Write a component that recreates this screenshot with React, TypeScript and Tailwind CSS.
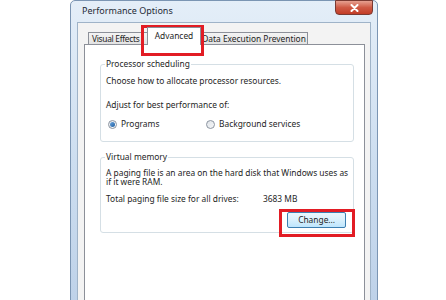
export default function App() {
  const font = { fontFamily: '"Noto Sans", "Open Sans", sans-serif' };
  return (
    <div className="w-[446px] h-[300px] bg-white overflow-hidden text-[8.4px] leading-[10px] text-[#1e1e1e] whitespace-nowrap relative" style={font}>
      <div className="ml-[70px] w-[308px] h-[320px] flex flex-col rounded-t-[5px] border border-[#7b95b3] bg-gradient-to-b from-[#e4eef8] via-[#cddef0] to-[#bcd0e8]">
        {/* title bar */}
        <div className="h-[21px] flex items-start relative">
          <div className="pl-[11px] pt-[5px] text-[9px] text-[#1f2a36]">Performance Options</div>
          <div className="absolute right-[4px] top-[-1px] w-[38px] h-[15px] rounded-b-[4px] border border-[#7a3a32] bg-gradient-to-b from-[#e6a091] via-[#cf5a45] to-[#c23c26] flex items-center justify-center">
            <svg width="9" height="8" viewBox="0 0 9 8">
              <path d="M1.5 1 L7.5 7 M7.5 1 L1.5 7" stroke="#fff" strokeWidth="2" strokeLinecap="round" />
            </svg>
          </div>
        </div>
        {/* client */}
        <div className="flex-1 mx-[6px] bg-[#f3f3f3] border border-[#9fb3c8] border-b-0 flex flex-col pl-[6px] pr-[5px]">
          {/* tabs */}
          <div className="h-[21px] flex items-end pl-[4px]">
            <div className="h-[12px] w-[61px] border border-b-0 border-[#8c9099] bg-gradient-to-b from-[#f4f4f4] to-[#e2e2e2] flex items-center pl-[3px] tracking-[-0.3px]">Visual Effects</div>
            <div className="h-[18px] w-[54px] -mb-[1px] -ml-[2px] border border-b-0 border-[#8c9099] bg-white flex items-start justify-center pt-[3px] relative z-10">Advanced</div>
            <div className="h-[12px] w-[108px] -ml-[1px] border border-b-0 border-[#8c9099] bg-gradient-to-b from-[#f4f4f4] to-[#e2e2e2] flex items-center justify-center">Data Execution Prevention</div>
          </div>
          {/* page */}
          <div className="flex-1 bg-white border border-[#8c9099] pl-[15px] pr-[10px] pt-[14px] flex flex-col">
            {/* Processor scheduling */}
            <fieldset className="border border-[#d5dfe5] rounded-[3px] px-[5px] h-[83px]">
              <legend className="px-[1px] -ml-[1px]">Processor scheduling</legend>
              <div className="mt-[7px]">Choose how to allocate processor resources.</div>
              <div className="mt-[14px]">Adjust for best performance of:</div>
              <div className="mt-[9px] flex items-center">
                <div className="flex items-center gap-[4px] w-[100px] pl-[2px]">
                  <span className="w-[9px] h-[9px] rounded-full border border-[#8b94a0] bg-gradient-to-br from-[#e6e9ee] to-[#ffffff] flex items-center justify-center">
                    <span className="w-[5px] h-[5px] rounded-full bg-gradient-to-br from-[#6aa6e0] to-[#1f5e9e]"></span>
                  </span>
                  <span>Programs</span>
                </div>
                <div className="flex items-center gap-[4px]">
                  <span className="w-[9px] h-[9px] rounded-full border border-[#8b94a0] bg-gradient-to-br from-[#dfe3e8] to-[#f6f7f8]"></span>
                  <span>Background services</span>
                </div>
              </div>
            </fieldset>
            {/* Virtual memory */}
            <fieldset className="mt-[10px] border border-[#d5dfe5] rounded-[3px] px-[5px] h-[81px]">
              <legend className="px-[1px] -ml-[1px]">Virtual memory</legend>
              <div className="mt-[6px] leading-[9px]">A paging file is an area on the hard disk that Windows uses as<br />if it were RAM.</div>
              <div className="mt-[8px] flex">
                <span className="w-[157px]">Total paging file size for all drives:</span>
                <span>3683 MB</span>
              </div>
              <div className="flex justify-end pr-[2px] mt-[8px]">
                <div className="relative">
                  <div className="w-[59px] h-[16px] rounded-[2px] border border-[#3c7fb1] bg-gradient-to-b from-[#eaf6fd] via-[#d9f0fc] to-[#bee6fd] flex items-center justify-center">Change...</div>
                  <div className="absolute -left-[8px] -top-[3px] w-[76px] h-[28px] border-[3px] border-[#e21c24]"></div>
                </div>
              </div>
            </fieldset>
          </div>
        </div>
      </div>
      {/* red highlight around Advanced tab */}
      <div className="absolute left-[141px] top-[25px] w-[63px] h-[31px] border-[3px] border-[#e21c24]"></div>
    </div>
  );
}
